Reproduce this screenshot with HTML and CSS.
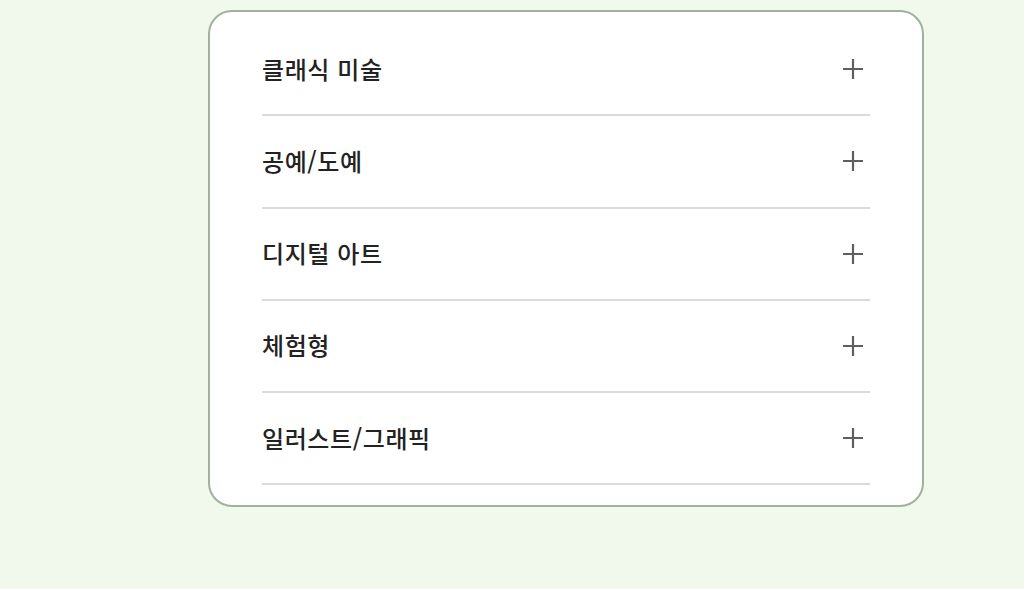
FILE: index.html
```html
<!DOCTYPE html>
<html lang="ko">
<head>
<meta charset="utf-8">
<link rel="stylesheet" href="styles.css">
</head>
<body>
<div class="card">
  <div class="row"><span class="label">클래식 미술</span><svg class="plus" viewBox="0 0 22 22"><path d="M11 1v20M1 11h20"/></svg></div>
  <div class="row"><span class="label">공예/도예</span><svg class="plus" viewBox="0 0 22 22"><path d="M11 1v20M1 11h20"/></svg></div>
  <div class="row"><span class="label">디지털 아트</span><svg class="plus" viewBox="0 0 22 22"><path d="M11 1v20M1 11h20"/></svg></div>
  <div class="row"><span class="label">체험형</span><svg class="plus" viewBox="0 0 22 22"><path d="M11 1v20M1 11h20"/></svg></div>
  <div class="row"><span class="label">일러스트/그래픽</span><svg class="plus" viewBox="0 0 22 22"><path d="M11 1v20M1 11h20"/></svg></div>
</div>
</body>
</html>
```
FILE: styles.css
```css
html, body {
  margin: 0;
  padding: 0;
  background: #f1f9ed;
  height: 100%;
}
body {
  padding-top: 10px;
  padding-left: 208px;
  box-sizing: border-box;
  font-family: "Noto Sans CJK KR", "Noto Sans", sans-serif;
}
.card {
  width: 716px;
  box-sizing: border-box;
  background: #ffffff;
  border: 2px solid #a0b29b;
  border-radius: 24px;
  padding: 12px 52px 20px 52px;
}
.row {
  height: 90.25px;
  border-bottom: 2px solid #dadada;
  display: flex;
  align-items: center;
  justify-content: space-between;
}
.label {
  font-size: 24px;
  font-weight: 500;
  color: #222222;
  letter-spacing: 0.6px;
  padding-bottom: 2px;
}
.plus {
  width: 22px;
  height: 22px;
  margin-right: 6px;
  stroke: #5f5f5f;
  stroke-width: 2.2;
  fill: none;
}
```
